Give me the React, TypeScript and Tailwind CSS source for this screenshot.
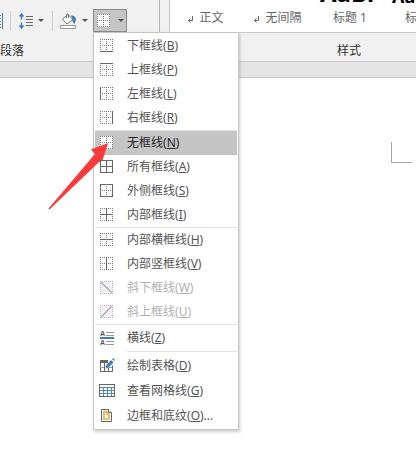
import type { ReactNode } from 'react'
import clsx from 'clsx'

type Edge = 'top' | 'bottom' | 'left' | 'right' | 'h' | 'v'

interface MenuEntry {
  label: string
  accessKey: string
  suffix?: string
  icon: ReactNode
  disabled?: boolean
  active?: boolean
  tall?: boolean
  separator?: 'full' | 'inset'
}

const edgePaths: Record<Edge, string> = {
  top: 'M1 1.5h13',
  bottom: 'M1 13.5h13',
  left: 'M1.5 1v13',
  right: 'M13.5 1v13',
  h: 'M1 7.5h13',
  v: 'M7.5 1v13',
}

const allEdges: Edge[] = ['top', 'bottom', 'left', 'right', 'h', 'v']

function BorderIcon({ solid = [] }: { solid?: Edge[] }) {
  return (
    <svg className="w-4 h-4 shrink-0" viewBox="0 0 16 16" fill="none" shapeRendering="crispEdges" aria-hidden="true">
      <path d="M1 1h13v13h-13z" fill="#fff" />
      {allEdges.map(edge => (
        <path
          key={edge}
          d={edgePaths[edge]}
          stroke={solid.includes(edge) ? '#666' : '#777'}
          strokeDasharray={solid.includes(edge) ? undefined : '1 1'}
        />
      ))}
    </svg>
  )
}

function DiagonalIcon({ d }: { d: string }) {
  return (
    <svg className="w-4 h-4 shrink-0" viewBox="0 0 16 16" fill="none" aria-hidden="true">
      <path d="M2 2h11v11h-11z" fill="#f5eff7" />
      {(['top', 'bottom', 'left', 'right'] as Edge[]).map(edge => (
        <path key={edge} d={edgePaths[edge]} stroke="#b5b5b5" strokeDasharray="1 1" shapeRendering="crispEdges" />
      ))}
      <path d={d} stroke="#aaa" strokeWidth="1.2" />
    </svg>
  )
}

function RuleIcon() {
  return (
    <svg className="w-4 h-4 shrink-0" viewBox="0 0 16 16" aria-hidden="true">
      <g fill="#555" fontFamily="Liberation Sans, sans-serif" fontSize="7" fontWeight="700">
        <text x="1" y="6">A</text>
        <text x="1" y="15">A</text>
      </g>
      <path d="M7 2.5h8M7 5.5h8M7 11.5h8M7 14.5h8" stroke="#999" />
      <path d="M1 7h14v2h-14z" fill="#3f7fbf" />
    </svg>
  )
}

function DrawTableIcon() {
  return (
    <svg className="w-4 h-4 shrink-0" viewBox="0 0 16 16" fill="none" aria-hidden="true">
      <path d="M1 2h8v3h-8z" fill="#666" />
      <path d="M1.5 2.5v11h12v-6M5.5 5v8M9.5 10v3" stroke="#666" />
      <path d="M1 9.5h4M10 9.5h3" stroke="#999" />
      <path d="M6 11l1-3.500 5-5.500 2.500 2.500-5.500 5.500z" fill="#3f7fbf" />
      <path d="M13 1l1-1 2 2-1 1z" fill="#3f7fbf" />
      <path d="M6 11l.5-2 1.500 1.500z" fill="#fff" />
    </svg>
  )
}

function GridlinesIcon() {
  return (
    <svg className="w-4 h-4 shrink-0" viewBox="0 0 16 16" fill="none" shapeRendering="crispEdges" aria-hidden="true">
      <path d="M1 4.500h14M1 7.500h14M1 10.500h14M4.500 4v9M8.500 4v9M12.500 4v9" stroke="#4f8ac6" />
      <path d="M.5 1.500h15v12h-15z" stroke="#666" />
    </svg>
  )
}

function PageBorderIcon() {
  return (
    <svg className="w-4 h-4 shrink-0" viewBox="0 0 16 16" fill="none" aria-hidden="true">
      <path d="M2.500 1.500h7l3 3v9h-10z" fill="#fff" stroke="#666" />
      <path d="M5 4h3v2h2v5h-5z" stroke="#edbd72" strokeWidth="2" />
      <path d="M9.500 1.500v3h3" fill="#fff" stroke="#666" />
    </svg>
  )
}

const entries: MenuEntry[] = [
  { label: '下框线', accessKey: 'B', icon: <BorderIcon solid={['bottom']} /> },
  { label: '上框线', accessKey: 'P', icon: <BorderIcon solid={['top']} /> },
  { label: '左框线', accessKey: 'L', icon: <BorderIcon solid={['left']} /> },
  { label: '右框线', accessKey: 'R', icon: <BorderIcon solid={['right']} /> },
  { label: '无框线', accessKey: 'N', icon: <BorderIcon />, active: true, separator: 'full' },
  { label: '所有框线', accessKey: 'A', icon: <BorderIcon solid={allEdges} /> },
  { label: '外侧框线', accessKey: 'S', icon: <BorderIcon solid={['top', 'bottom', 'left', 'right']} /> },
  { label: '内部框线', accessKey: 'I', icon: <BorderIcon solid={['h', 'v']} /> },
  { label: '内部横框线', accessKey: 'H', icon: <BorderIcon solid={['h']} />, separator: 'full' },
  { label: '内部竖框线', accessKey: 'V', icon: <BorderIcon solid={['v']} /> },
  { label: '斜下框线', accessKey: 'W', icon: <DiagonalIcon d="M2 2l11 11" />, disabled: true },
  { label: '斜上框线', accessKey: 'U', icon: <DiagonalIcon d="M2 13l11-11" />, disabled: true },
  { label: '横线', accessKey: 'Z', icon: <RuleIcon />, separator: 'full', tall: true },
  { label: '绘制表格', accessKey: 'D', icon: <DrawTableIcon />, separator: 'inset', tall: true },
  { label: '查看网格线', accessKey: 'G', icon: <GridlinesIcon />, tall: true },
  { label: '边框和底纹', accessKey: 'O', suffix: '...', icon: <PageBorderIcon />, tall: true },
]

const styles = [
  { name: '正文', mark: true },
  { name: '无间隔', mark: true },
  { name: '标题 1', preview: 'AaBl', previewClass: '-top-[19px] text-2xl/6 font-bold' },
  { name: '标题 2', preview: 'AaBl', previewClass: '-top-4 text-lg/6 font-bold' },
]

function Caret() {
  return (
    <svg className="w-[6px] h-[3px]" viewBox="0 0 6 3" aria-hidden="true">
      <path d="M0 0h6l-3 3z" fill="#555" />
    </svg>
  )
}

function Pointer() {
  return (
    <svg
      className="absolute top-[11px] -left-[47px] w-[60px] h-[68px] pointer-events-none"
      viewBox="0 0 60 68"
      aria-hidden="true"
    >
      <path d="M60 1L43 7.500l4 4.500L0.500 66.500l1 1L51 20l3 0z" fill="#fb3b3b" />
    </svg>
  )
}

function BorderMenu() {
  return (
    <div
      role="menu"
      aria-label="边框"
      className="absolute top-full left-0 z-10 w-[146px] border border-[#c6c6c6] bg-white px-px pt-px pb-px shadow-[1px_2px_3px_rgba(0,0,0,0.2)]"
    >
      {entries.map(entry => (
        <div key={entry.accessKey}>
          {entry.separator === 'full' && <div className="h-px bg-[#e2e2e2]" />}
          {entry.separator === 'inset' && <div className="my-px ml-8 h-px bg-[#e2e2e2]" />}
          <button
            type="button"
            role="menuitem"
            disabled={entry.disabled}
            className={clsx(
              'relative flex w-full items-center gap-3 pl-1 text-left text-xs whitespace-nowrap',
              entry.tall ? 'h-[25px] pt-px' : 'h-6',
              entry.active && 'bg-[#c5c5c5] text-[#262626]',
              entry.disabled && 'text-[#b1b1b1]',
              !entry.active && !entry.disabled && 'text-[#555]'
            )}
          >
            {entry.icon}
            <span>
              {entry.label}(<span className="underline">{entry.accessKey}</span>){entry.suffix}
            </span>
            {entry.active && <Pointer />}
          </button>
        </div>
      ))}
    </div>
  )
}

function ParagraphGroup() {
  return (
    <section className="flex h-full w-40 shrink-0 flex-col border-r border-[#b5b5b5]" aria-label="段落">
      <div className="flex h-8 items-end">
        <div className="flex h-[23px] items-center">
          <svg className="w-[3px] h-4" viewBox="0 0 3 16" shapeRendering="crispEdges" aria-hidden="true">
            <path d="M0 2.500h1M0 5.500h1M0 8.500h1M0 11.500h1M0 14.500h1" stroke="#777" />
            <path d="M2.500 0v16" stroke="#3f7fbf" />
          </svg>
          <div className="ml-[7px] h-5 w-px bg-[#d0d0d0]" />
          <button type="button" aria-label="行距" className="ml-2 flex items-center gap-[5px]">
            <svg className="w-[14px] h-4" viewBox="0 0 14 16" fill="none" aria-hidden="true">
              <path d="M2.500 1v5.500M2.500 9.500v5.500M.5 3.500l2-2.500 2 2.500M.5 12.500l2 2.500 2-2.500" stroke="#3f7fbf" strokeWidth="1.500" />
              <path d="M7 3.500h7M7 6.500h7M7 9.500h7M7 12.500h7" stroke="#666" />
            </svg>
            <Caret />
          </button>
          <div className="ml-2 h-5 w-px bg-[#d0d0d0]" />
          <button type="button" aria-label="底纹" className="ml-[7px] flex items-center gap-[5px]">
            <svg className="w-[17px] h-4" viewBox="0 0 17 16" fill="none" aria-hidden="true">
              <path d="M8 1.500l5 5-6 4.500-4.500-5z" fill="#fff" stroke="#777" />
              <path d="M6.500 5v-3.500q1-1.500 2 0v3.500" stroke="#777" />
              <path d="M11 2.500q5 0 5 4.500l-1.500 4-2-2.500 0-2z" fill="#3f7fbf" />
              <path d="M.5 12.500h15v3h-15z" fill="#fff" stroke="#999" />
            </svg>
            <Caret />
          </button>
        </div>
        <div className="relative ml-[5px]">
          <button
            type="button"
            aria-label="边框"
            aria-haspopup="menu"
            aria-expanded="true"
            className="flex h-[23px] w-[34px] items-center gap-[6px] border border-[#8a8a8a] bg-[#c5c5c5] pl-[2px]"
          >
            <BorderIcon />
            <Caret />
          </button>
          <BorderMenu />
        </div>
      </div>
      <h2 className="flex flex-1 items-center pt-2 text-xs text-[#333]">段落</h2>
    </section>
  )
}

function StylesGroup() {
  return (
    <section className="ml-[9px] flex h-full min-w-0 flex-1 flex-col overflow-hidden" aria-label="样式">
      <div className="flex h-[33px] border-b border-l border-[#c8c8c8] bg-white">
        {styles.map(style => (
          <button
            key={style.name}
            type="button"
            className="relative flex h-full w-[72px] shrink-0 items-center justify-center gap-[5px] overflow-hidden pt-[3px] text-xs text-[#666]"
          >
            {style.preview && (
              <span className={clsx('absolute left-[6px] text-black', style.previewClass)}>{style.preview}</span>
            )}
            {style.mark && (
              <svg className="mt-1 w-[6px] h-[7px]" viewBox="0 0 6 7" fill="none" aria-hidden="true">
                <path d="M4.500 0v4.500h-4M2.500 2.500l-2 2 2 2" stroke="#666" />
              </svg>
            )}
            <span>{style.name}</span>
          </button>
        ))}
      </div>
      <h2 className="flex flex-1 items-center pl-[168px] pt-2 text-xs text-[#333]">样式</h2>
    </section>
  )
}

export default function App() {
  return (
    <div className="min-h-screen bg-white font-['Noto_Sans','Noto_Sans_CJK_SC',sans-serif]">
      <header className="flex h-[61px] bg-[#f1f1f1]">
        <ParagraphGroup />
        <StylesGroup />
      </header>
      <div className="h-[17px] border-y border-[#c6c6c6] bg-[#e5e5e5]" />
      <main className="flex justify-end pt-16 pr-1">
        {/* top-left margin mark of the page */}
        <div className="h-[21px] w-[21px] border-b border-l border-[#a6a6a6]" />
      </main>
    </div>
  )
}
